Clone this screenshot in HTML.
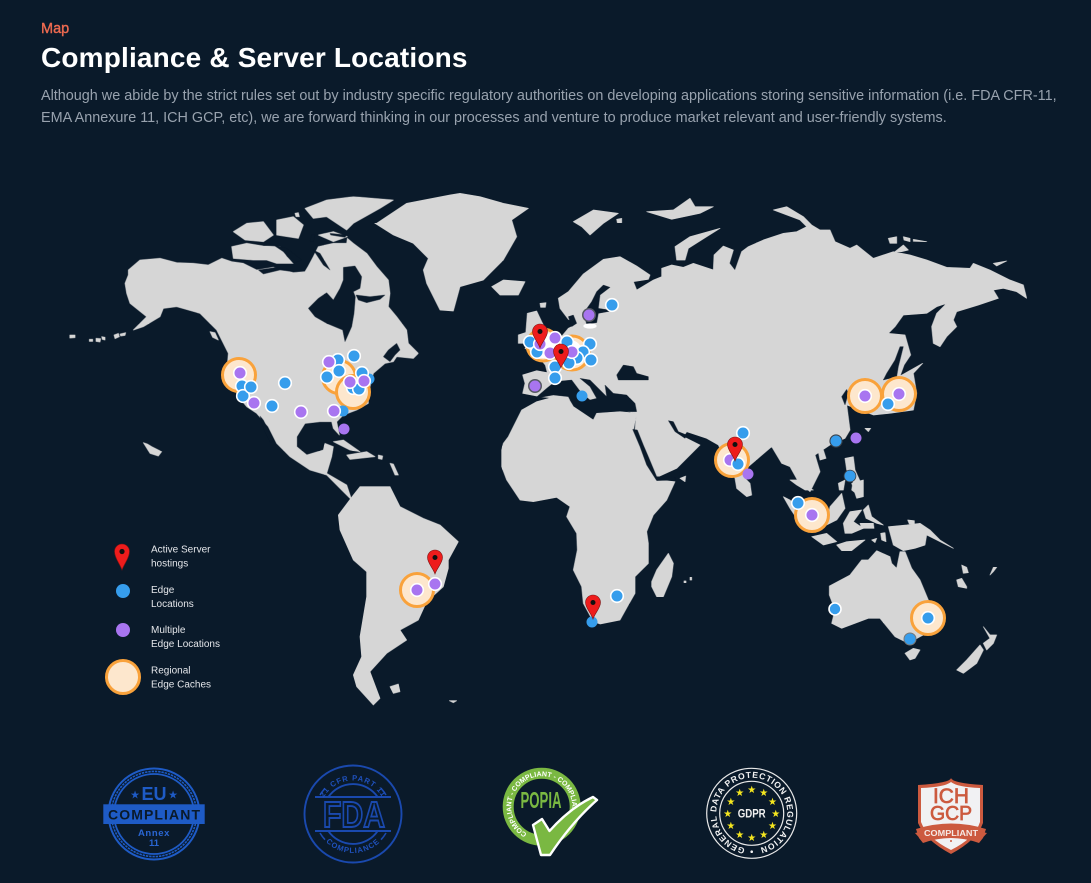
<!DOCTYPE html>
<html lang="en"><head><meta charset="utf-8"><title>Compliance &amp; Server Locations</title>
<style>
html,body{margin:0;padding:0;background:#0a1a2a}
body{width:1091px;height:883px;overflow:hidden;position:relative;font-family:"Liberation Sans",Arial,sans-serif}
.map{position:absolute;left:41px;top:21px;font-size:14.5px;line-height:16px;color:#ee6a50;font-weight:400;-webkit-text-stroke:.4px #ee6a50}
h1{position:absolute;left:41px;top:42px;margin:0;font-size:28px;line-height:32px;color:#fff;font-weight:700;letter-spacing:.17px;white-space:nowrap}
p{position:absolute;left:41px;top:85px;margin:0;font-size:14.4px;line-height:22px;color:#98a2ae;white-space:nowrap}
svg{position:absolute;left:0;top:0}
.m{filter:blur(.45px)}
.l polygon{fill:#d6d6d6;stroke:#d6d6d6;stroke-width:2;stroke-linejoin:round}
.s polygon{fill:#0a1a2a;stroke:#0a1a2a;stroke-width:1;stroke-linejoin:round}
.c{fill:#fde7cd;stroke:#f9a23b;stroke-width:3}
.b{fill:#369dec;stroke:#fff;stroke-width:1.6}
.p{fill:#a875f0;stroke:#fff;stroke-width:1.6}
.bn{fill:#369dec}.pn{fill:#a875f0}
.pin{fill:#ee1c1c;stroke:#7a1414;stroke-width:.6}
.lg{font-size:10px;fill:#e4e6ea}
</style></head><body>
<div class="map">Map</div>
<h1>Compliance &amp; Server Locations</h1>
<p>Although we abide by the strict rules set out by industry specific regulatory authorities on developing applications storing sensitive information (i.e. FDA CFR-11,<br>EMA Annexure 11, ICH GCP, etc), we are forward thinking in our processes and venture to produce market relevant and user-friendly systems.</p>
<svg width="1091" height="883" viewBox="0 0 1091 883" xmlns="http://www.w3.org/2000/svg">
<defs>
<path id="fdaT" d="M319.5,814A33.5,33.5 0 0 1 386.5,814"/>
<path id="fdaB" d="M314,814A39,39 0 0 0 392,814"/>
<path id="popR" d="M541.7,837.2A30.5,30.5 0 1 1 541.8,837.2"/>
<path id="gdR" d="M751.7,848.8A35.5,35.5 0 1 1 751.8,848.8"/>
</defs>
<g class="m" transform="scale(.33333)">
<!-- North America -->
<g class="l" transform="translate(180,540)">
<polygon points="205,270 240,240 300,235 350,248 400,250 445,255 485,235 515,245 550,250 590,270 640,262 700,278 735,275 745,258 760,230 775,200 820,190 860,190 862,175 880,190 920,220 950,260 985,300 990,340 985,380 1010,410 1040,450 1045,490 1075,520 1060,535 1010,530 1000,545 975,550 940,580 935,600 925,640 925,670 890,690 850,705 830,725 838,765 820,745 815,725 780,725 735,730 710,770 710,800 740,825 790,810 795,790 820,800 815,830 800,880 860,915 875,960 850,935 800,885 750,870 690,830 650,790 625,740 590,700 560,680 535,650 500,580 505,520 470,450 420,400 350,380 310,385 300,410 250,440 220,450 260,410 210,370 200,340 195,310 205,285"/>
<polygon points="515,200 560,190 610,198 660,200 680,230 700,250 650,250 620,240 580,240 520,235"/>
<polygon points="520,155 560,130 610,125 640,165 610,185 555,180"/>
<polygon points="735,85 800,60 880,50 1000,60 960,85 880,130 860,150 800,110 760,115"/>
<polygon points="650,120 700,110 730,135 715,175 650,165"/>
<polygon points="775,165 820,155 862,170 820,185"/>
<polygon points="705,100 715,98 718,110 708,110"/>
<polygon points="450,455 465,458 475,480 458,472"/>
<polygon points="250,788 262,792 275,800 305,815 295,828 270,820"/>
<polygon points="820,785 850,780 900,815 870,810"/>
<polygon points="860,825 920,815 945,830 870,838"/>
<polygon points="955,825 968,828 966,838 955,836"/>
<polygon points="990,850 1000,852 1015,885 1005,885"/>
<polygon points="30,465 45,465 45,473 30,474"/><polygon points="88,478 98,478 98,484 88,484"/><polygon points="108,475 122,476 120,486 108,484"/><polygon points="125,470 135,472 135,480 127,478"/><polygon points="162,465 175,460 178,470 165,476"/><polygon points="180,462 197,458 195,466 182,468"/>
</g>
<g class="s" transform="translate(180,540)">
<polygon points="745,385 775,355 800,338 820,360 840,325 850,300 850,262 885,258 905,290 900,325 880,335 886,350 882,400 875,440 855,485 848,450 800,430 765,410"/>
<polygon points="888,345 930,350 975,345 960,358 920,368 895,360"/>
<polygon points="970,530 985,510 1010,490 1020,510 1005,525 990,545"/>
<polygon points="600,708 610,720 640,780 632,790 612,750"/>
<polygon points="755,165 765,165 760,185 750,185"/>
<polygon points="760,210 780,220 810,270 790,255"/>
<polygon points="595,270 650,262 700,275 660,270 610,282"/>
<polygon points="640,195 680,205 725,240 700,250 670,215"/>
<polygon points="810,160 860,165 855,172 812,165"/>
</g>
<!-- Greenland, Iceland, Eurasia -->
<g transform="translate(1320,540)">
<g class="l">
<polygon points="-190,130 -100,70 30,45 60,40 120,50 190,70 265,85 215,120 230,170 190,240 130,300 60,320 40,393 0,390 -40,310 -50,270 -35,235 -80,190 -140,165 -195,130"/>
<polygon points="155,320 190,300 255,305 235,345 180,345"/>
<polygon points="248,585 290,572 322,578 316,555 295,530 255,505 262,495 320,490 360,475 385,445 395,440 400,425 385,418 360,385 355,355 385,335 430,282 490,238 540,230 590,258 630,285 625,298 580,305 590,330 640,300 665,290 665,265 695,255 730,262 760,250 820,270 822,225 850,198 880,210 868,250 885,272 905,215 925,200 970,180 1030,160 1070,155 1100,140 1080,120 1000,90 1040,80 1090,110 1115,135 1140,150 1170,150 1185,185 1230,205 1250,195 1300,235 1360,215 1410,225 1460,240 1520,262 1590,265 1600,250 1650,270 1710,300 1750,315 1760,355 1730,335 1690,325 1660,330 1675,355 1615,375 1550,395 1540,420 1550,440 1520,470 1500,500 1480,490 1475,440 1490,400 1520,370 1490,380 1460,400 1390,405 1365,440 1345,460 1395,465 1412,525 1392,555 1380,588 1448,550 1420,580 1430,640 1420,690 1350,700 1300,705 1220,675 1215,635 1230,750 1215,775 1170,795 1125,825 1140,875 1110,935 1075,905 1050,860 1025,850 995,800 960,830 925,860 910,890 930,910 935,945 920,950 890,925 885,895 835,795 800,775 740,755 730,770 780,795 710,865 655,890 650,880 615,810 585,750 590,700 400,660 300,650 248,640 255,610"/>
<polygon points="400,125 460,90 535,100 490,130 450,165 425,140"/>
<polygon points="530,118 545,115 545,128 532,128"/>
<polygon points="620,95 700,90 750,55 765,80 820,80 780,100 695,118"/>
<polygon points="710,240 705,200 750,170 840,145 800,170 745,205 735,240"/>
<polygon points="300,370 318,368 316,382 302,382"/>
<polygon points="262,400 290,393 305,425 325,465 290,480 255,490"/>
<polygon points="235,465 265,455 262,490 235,490"/>
<polygon points="1345,175 1370,170 1370,190 1350,190"/><polygon points="1390,170 1410,175 1410,185 1392,180"/><polygon points="1420,178 1460,185 1420,184"/><polygon points="1365,215 1390,195 1405,210 1385,215"/><polygon points="1660,250 1700,243 1670,258"/><polygon points="1275,745 1292,745 1285,755"/>
<polygon points="1215,835 1240,830 1245,870 1270,925 1260,950 1235,930 1240,900 1220,870"/>
<polygon points="1135,815 1150,810 1158,835 1140,840"/>
</g>
<g class="s">
<polygon points="285,655 320,625 345,605 395,600 425,640 450,660 470,655 450,620 420,595 450,600 480,630 500,650 495,615 520,640 560,645 585,670 590,695 540,695 470,700 465,720 435,705 400,680 385,650 340,645"/>
<polygon points="530,585 550,555 580,560 590,580 625,590 625,600 560,600 535,600"/>
<polygon points="685,722 700,725 715,755 740,765 735,775 705,755"/>
<polygon points="490,315 510,322 480,345 475,385 520,392 475,400 470,428 440,432 430,400 455,365 470,335"/>
<polygon points="385,410 400,405 410,430 395,440"/>
<polygon points="1380,500 1390,500 1375,560 1370,590 1330,600 1340,580 1365,540"/>
<polygon points="1220,628 1225,640 1215,675 1205,650"/>
</g>
<ellipse cx="450" cy="438" rx="20" ry="8" fill="#fff"/>
<g class="l">
<polygon points="185,810 190,790 205,770 245,690 290,665 345,650 385,655 400,680 460,720 470,700 540,695 590,700 580,750 615,810 650,880 655,900 705,905 680,960 640,1005 620,1055 625,1090 625,1150 585,1190 585,1240 565,1275 540,1320 480,1332 460,1325 430,1270 425,1220 400,1170 412,1110 410,1060 380,1010 390,980 350,952 280,965 240,960 200,900 185,860"/>
<polygon points="635,1205 650,1170 685,1120 700,1150 695,1190 670,1250 650,1250 635,1220"/>
<polygon points="720,895 737,888 735,905"/>
<polygon points="732,1203 738,1203 738,1208 732,1208"/><polygon points="750,1192 755,1192 755,1200 750,1200"/>
</g>
<g class="s">
<polygon points="578,748 592,750 610,795 625,830 650,890 705,892 705,900 650,902 620,855 600,800"/>
</g>
</g>
<!-- Southeast Asia, Australia -->
<g class="l" transform="translate(2340,1440)">
<polygon points="30,0 55,0 70,15 100,30 75,30 50,15"/>
<polygon points="10,50 30,60 45,80 55,100 70,135 50,115 30,85"/>
<polygon points="95,170 140,160 170,185 130,195"/>
<polygon points="150,80 185,40 195,85 170,120 140,135"/>
<polygon points="170,195 200,185 255,180 215,212 185,212"/>
<polygon points="190,130 210,95 245,90 220,125 250,145 215,160 195,160"/>
<polygon points="240,130 280,130 282,145 245,145"/>
<polygon points="250,90 265,75 275,110 310,135 290,130 258,115"/>
<polygon points="175,10 195,0 190,30 178,30"/><polygon points="215,10 250,0 250,50 230,55"/>
<polygon points="275,180 290,175 285,188"/><polygon points="302,160 315,158 318,185 305,180"/>
<polygon points="325,140 380,135 420,130 450,150 480,180 520,205 490,190 440,165 435,195 405,205 370,212 340,195"/>
<polygon points="383,120 403,122 403,132 388,132"/>
<polygon points="148,318 210,285 245,240 265,240 290,212 330,230 335,250 350,265 360,215 375,215 395,265 420,300 445,360 495,410 460,450 420,470 385,490 345,470 300,415 265,415 225,430 185,445 155,430 165,390 148,345"/>
<polygon points="375,520 400,505 420,510 405,535 390,540"/>
<polygon points="530,570 560,540 600,495 610,510 590,550 550,580"/>
<polygon points="610,440 630,465 650,465 640,490 620,510 610,490 630,475"/>
<polygon points="545,255 560,262 565,278 550,280"/><polygon points="530,300 545,295 560,320 560,325 535,320"/><polygon points="630,285 640,262 650,262 640,275"/>
</g>
<!-- South America -->
<g class="l" transform="translate(270,1590)">
<polygon points="750,0 745,-45 790,-105 810,-130 900,-130 930,-70 1000,-35 1050,-15 1105,35 1075,90 1075,115 1060,170 1010,215 985,270 930,300 950,330 890,370 840,425 870,505 850,525 800,470 790,435 815,380 810,320 830,200 830,125 790,90"/>
<polygon points="900,470 925,462 930,485 910,490"/>
<polygon points="1078,512 1100,512 1090,518"/>
</g>
</g>
<!-- regional caches -->
<circle class="c" cx="239" cy="375" r="16.5"/><circle class="c" cx="339" cy="377" r="16.5"/><circle class="c" cx="353" cy="392" r="16.5"/>
<circle class="c" cx="543" cy="345" r="16"/><circle class="c" cx="572" cy="353" r="17"/>
<circle class="c" cx="732" cy="460" r="16.5"/><circle class="c" cx="865" cy="396" r="16.5"/><circle class="c" cx="899" cy="394" r="16.5"/>
<circle class="c" cx="812" cy="515" r="16.5"/><circle class="c" cx="417" cy="590" r="16.5"/><circle class="c" cx="928" cy="618" r="16.5"/>
<circle cx="543" cy="345" r="13" fill="#fff"/><circle cx="570" cy="352" r="12" fill="#fff"/>
<!-- dots -->
<g>
<circle class="p" cx="240" cy="373" r="6.3"/><circle class="b" cx="242" cy="386" r="6.3"/><circle class="b" cx="243" cy="396" r="6.3"/><circle class="b" cx="251" cy="387" r="6.3"/><circle class="p" cx="254" cy="403" r="6.3"/>
<circle class="b" cx="285" cy="383" r="6.3"/><circle class="b" cx="272" cy="406" r="6.3"/><circle class="p" cx="301" cy="412" r="6.3"/>
<circle class="bn" cx="343" cy="411" r="5.5"/><circle class="p" cx="334" cy="411" r="6.3"/><circle class="pn" cx="344" cy="429" r="5.5"/>
<circle class="b" cx="354" cy="356" r="6.3"/><circle class="b" cx="338" cy="360" r="6.3"/><circle class="p" cx="329" cy="362" r="6.3"/><circle class="b" cx="339" cy="371" r="6.3"/><circle class="b" cx="327" cy="377" r="6.3"/>
<circle class="b" cx="353" cy="388" r="6.3"/><circle class="b" cx="359" cy="389" r="6.3"/><circle class="bn" cx="369" cy="379" r="5.5"/><circle class="b" cx="362" cy="373" r="6.3"/><circle class="p" cx="350" cy="382" r="6.3"/><circle class="p" cx="364" cy="381" r="6.3"/>
<circle class="b" cx="612" cy="305" r="6.3"/><circle cx="589" cy="315" r="7" fill="#565a63"/><circle class="pn" cx="589" cy="315" r="5.5"/>
<circle class="b" cx="530" cy="342" r="6.3"/><circle class="b" cx="537" cy="352" r="6.3"/><circle class="p" cx="540" cy="344" r="6.3"/><circle class="p" cx="555" cy="338" r="6.3"/>
<circle class="b" cx="567" cy="342" r="6.3"/><circle class="b" cx="590" cy="344" r="6.3"/><circle class="b" cx="583" cy="352" r="6.3"/><circle class="b" cx="591" cy="360" r="6.3"/><circle class="b" cx="577" cy="358" r="6.3"/><circle class="b" cx="569" cy="363" r="6.3"/><circle class="b" cx="555" cy="367" r="6.3"/>
<circle class="p" cx="550" cy="353" r="6.3"/><circle class="p" cx="572" cy="352" r="6.3"/><circle class="b" cx="555" cy="378" r="6.3"/>
<circle cx="535" cy="386" r="7" fill="#565a63"/><circle class="pn" cx="535" cy="386" r="5.5"/><circle class="bn" cx="582" cy="396" r="5.5"/>
<circle class="b" cx="743" cy="433" r="6.3"/><circle class="p" cx="730" cy="460" r="6.3"/><circle class="b" cx="738" cy="464" r="6.3"/><circle class="pn" cx="748" cy="474" r="5.5"/>
<circle class="p" cx="865" cy="396" r="6.3"/><circle class="p" cx="899" cy="394" r="6.3"/><circle class="b" cx="888" cy="404" r="6.3"/>
<circle cx="836" cy="441" r="6.6" fill="#3a4048"/><circle class="bn" cx="836" cy="441" r="5.5"/><circle class="pn" cx="856" cy="438" r="5.5"/><circle cx="850" cy="476" r="6.3" fill="#3a4048"/><circle class="bn" cx="850" cy="476" r="5.5"/>
<circle class="b" cx="798" cy="503" r="6.3"/><circle class="p" cx="812" cy="515" r="6.3"/><circle class="b" cx="835" cy="609" r="6"/><circle class="b" cx="928" cy="618" r="6.3"/><circle cx="910" cy="639" r="6.5" fill="#777"/><circle class="bn" cx="910" cy="639" r="5.5"/>
<circle class="b" cx="617" cy="596" r="6.3"/><circle class="bn" cx="592" cy="622" r="5.5"/>
<circle class="p" cx="435" cy="584" r="6.3"/><circle class="p" cx="417" cy="590" r="6.3"/>
</g>
<!-- pins -->
<g id="pins">
<g transform="translate(540,332)"><path class="pin" d="M0,16C-2,10-7.5,5-7.5,-.5A7.5,7.5 0 1 1 7.5,-.5C7.5,5 2,10 0,16Z"/><circle cy="-.5" r="2.5" fill="#111"/></g>
<g transform="translate(561,352)"><path class="pin" d="M0,16C-2,10-7.5,5-7.5,-.5A7.5,7.5 0 1 1 7.5,-.5C7.5,5 2,10 0,16Z"/><circle cy="-.5" r="2.5" fill="#111"/></g>
<g transform="translate(735,445)"><path class="pin" d="M0,16C-2,10-7.5,5-7.5,-.5A7.5,7.5 0 1 1 7.5,-.5C7.5,5 2,10 0,16Z"/><circle cy="-.5" r="2.5" fill="#111"/></g>
<g transform="translate(593,603)"><path class="pin" d="M0,16C-2,10-7.5,5-7.5,-.5A7.5,7.5 0 1 1 7.5,-.5C7.5,5 2,10 0,16Z"/><circle cy="-.5" r="2.5" fill="#111"/></g>
<g transform="translate(435,558)"><path class="pin" d="M0,16C-2,10-7.5,5-7.5,-.5A7.5,7.5 0 1 1 7.5,-.5C7.5,5 2,10 0,16Z"/><circle cy="-.5" r="2.5" fill="#111"/></g>
<g transform="translate(122,552)"><path class="pin" d="M0,18C-2,12-7.5,6-7.5,-.5A7.5,7.5 0 1 1 7.5,-.5C7.5,6 2,12 0,18Z"/><circle cy="-.5" r="2.6" fill="#111"/></g>
</g>
<!-- legend -->
<circle class="bn" cx="123" cy="591" r="7"/><circle class="pn" cx="123" cy="630" r="7"/><circle class="c" cx="123" cy="677" r="16.5"/>
<text class="lg" x="151" y="552.5">Active Server</text><text class="lg" x="151" y="566.5">hostings</text>
<text class="lg" x="151" y="593">Edge</text><text class="lg" x="151" y="607">Locations</text>
<text class="lg" x="151" y="633">Multiple</text><text class="lg" x="151" y="647">Edge Locations</text>
<text class="lg" x="151" y="673.5">Regional</text><text class="lg" x="151" y="687.5">Edge Caches</text>
<!-- EU badge -->
<g fill="none" stroke="#1e5bc6">
<circle cx="154" cy="814" r="45.5" stroke-width="2"/><circle cx="154" cy="814" r="42.6" stroke-width="1.6" stroke-dasharray="2.4 .9"/><circle cx="154" cy="814" r="40" stroke-width="1.8"/>
</g>
<rect x="103.3" y="804.3" width="101.4" height="19.7" fill="#1e5bc6"/>
<text x="154" y="819.5" font-size="14" font-weight="700" fill="#0a1a2a" text-anchor="middle" textLength="92" lengthAdjust="spacing">COMPLIANT</text>
<text x="154" y="800" font-size="18" font-weight="700" fill="#1e5bc6" text-anchor="middle">EU</text>
<text x="135" y="798.5" font-size="11" fill="#1e5bc6" text-anchor="middle">★</text><text x="173" y="798.5" font-size="11" fill="#1e5bc6" text-anchor="middle">★</text>
<text x="154" y="836" font-size="9.5" font-weight="700" fill="#2a66d2" text-anchor="middle" letter-spacing=".6">Annex</text>
<text x="154" y="846" font-size="9.5" font-weight="700" fill="#2a66d2" text-anchor="middle">11</text>
<!-- FDA badge -->
<g fill="none" stroke="#1a49ae">
<circle cx="353" cy="814" r="48.5" stroke-width="1.9"/>
<path d="M328.3,797A30,30 0 0 1 377.7,797M328.3,831A30,30 0 0 0 377.7,831" stroke-width="1.9"/>
<path d="M320,795A38,38 0 0 1 325,788.3M386,795A38,38 0 0 0 381,788.3M320,833A38,38 0 0 0 325,839.7M386,833A38,38 0 0 1 381,839.7" stroke-width="1.6"/>
<path d="M315,797H391M315,831H391" stroke-width="1.9"/>
</g>
<text font-size="7.6" font-weight="700" fill="#1f51bd" letter-spacing=".9"><textPath href="#fdaT" startOffset="50%" text-anchor="middle">21 CFR PART 11</textPath></text>
<text font-size="7.6" font-weight="700" fill="#1f51bd" letter-spacing=".9"><textPath href="#fdaB" startOffset="50%" text-anchor="middle">COMPLIANCE</textPath></text>
<text x="354" y="827" font-size="36" font-weight="700" fill="none" stroke="#1a49ae" stroke-width="1.9" text-anchor="middle" textLength="62" lengthAdjust="spacingAndGlyphs">FDA</text>
<!-- POPIA badge -->
<circle cx="541.7" cy="806.7" r="33.5" fill="none" stroke="#7ab842" stroke-width="11"/>
<text font-size="7" font-weight="700" fill="#fff"><textPath href="#popR" startOffset="8%">COMPLIANT - COMPLIANT - COMPLIANT</textPath></text>
<text x="541" y="808" font-size="23" font-weight="700" fill="#7ab842" text-anchor="middle" textLength="41" lengthAdjust="spacingAndGlyphs">POPIA</text>
<path d="M533,825L542,819L549.5,831Q570,808 593,797L597,800Q572,822 550,855L541,855Z" fill="#7ab842" stroke="#fff" stroke-width="2.4" stroke-linejoin="round"/>
<!-- GDPR badge -->
<g fill="none" stroke="#e8e8e8"><circle cx="751.7" cy="813.3" r="45" stroke-width="1.2"/><circle cx="751.7" cy="813.3" r="32" stroke-width="1.2"/></g>
<text font-size="8.6" font-weight="700" fill="#f4f4f4" letter-spacing=".7"><textPath href="#gdR" startOffset="3%">GENERAL DATA PROTECTION REGULATION</textPath></text>
<circle cx="751.7" cy="851.7" r="1.3" fill="#f4f4f4"/>
<g font-size="10" fill="#f5e61f" text-anchor="middle" transform="translate(0,1)">
<text x="751.7" y="792">★</text><text x="763.7" y="795">★</text><text x="772.5" y="804">★</text><text x="775.7" y="816">★</text><text x="772.5" y="828">★</text><text x="763.7" y="837">★</text><text x="751.7" y="840">★</text><text x="739.7" y="837">★</text><text x="730.9" y="828">★</text><text x="727.7" y="816">★</text><text x="730.9" y="804">★</text><text x="739.7" y="795">★</text>
</g>
<text x="751.7" y="817.5" font-size="11.5" font-weight="700" fill="#f0f0f0" text-anchor="middle" textLength="28" lengthAdjust="spacingAndGlyphs">GDPR</text>
<!-- ICH badge -->
<path d="M918,785Q950,783 951,778Q952,783 983,785L983,823Q977,840 951,854Q925,840 918,823Z" fill="#cc5a3f"/>
<path d="M921,788Q945,787 951,782Q957,787 980,788L980,822Q975,838 951,850Q927,838 921,822Z" fill="#f1f1f3"/>
<path d="M915,833L951,825L987,833L979,842L951,836L923,842Z" fill="#cc5a3f"/>
<path d="M916,829Q951,818 986,829L983,838L979,843Q951,833 923,843L919,838Z" fill="#cc5a3f"/>
<text x="951" y="803" font-size="21" font-weight="400" fill="#cc5a3f" stroke="#cc5a3f" stroke-width=".7" text-anchor="middle" textLength="36" lengthAdjust="spacingAndGlyphs">ICH</text>
<text x="951" y="820" font-size="20" font-weight="400" fill="#cc5a3f" stroke="#cc5a3f" stroke-width=".7" text-anchor="middle" textLength="42" lengthAdjust="spacingAndGlyphs">GCP</text>
<text x="951" y="836" font-size="8" font-weight="700" fill="#f6e9e4" text-anchor="middle" textLength="54" lengthAdjust="spacingAndGlyphs">COMPLIANT</text>
<circle cx="951" cy="841" r="1" fill="#cc5a3f"/>
</svg>
</body></html>
